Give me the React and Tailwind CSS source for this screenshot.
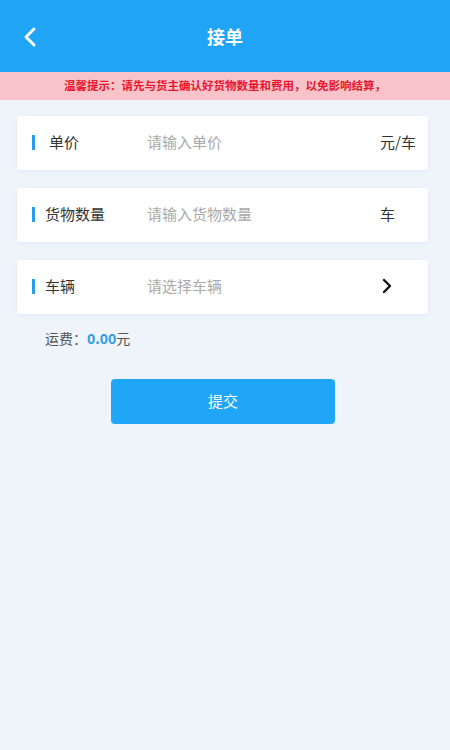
import React from "react";

function Row({ label, placeholder, right, pad }) {
  return (
    <div className="ml-[17px] mr-[22px] h-[54px] bg-white rounded-[3px] shadow-[0_1px_4px_rgba(150,170,200,0.18)] flex items-center pb-[2px]">
      <div className="w-[3px] h-[15px] bg-[#2a9be8] ml-[15px] shrink-0" />
      <div className={`w-[112px] shrink-0 text-[15px] text-[#333] ${pad ? "pl-[14px]" : "pl-[10px]"}`}>{label}</div>
      <div className="flex-1 text-[15px] text-[#a9a9a9]">{placeholder}</div>
      <div className="w-[48px] shrink-0 text-[15px] text-[#333]">{right}</div>
    </div>
  );
}

export default function App() {
  return (
    <div className="w-[450px] h-[750px] bg-[#eff4fb] flex flex-col" style={{ fontFamily: '"Noto Sans CJK SC", "Noto Sans", sans-serif' }}>
      <div className="h-[72px] bg-[#20a4f5] flex items-center relative shrink-0">
        <svg className="absolute left-[22px] top-[26px]" width="16" height="22" viewBox="0 0 16 22">
          <path d="M12 3 L4 11 L12 19" stroke="white" strokeWidth="3" fill="none" strokeLinecap="round" strokeLinejoin="round" />
        </svg>
        <div className="flex-1 text-center text-white text-[18px] font-bold">接单</div>
      </div>
      <div className="h-[28px] bg-[#f8c4ca] flex items-center justify-center text-[11.5px] font-bold text-[#e8162e] shrink-0">
        温馨提示：请先与货主确认好货物数量和费用，以免影响结算，
      </div>
      <div className="h-[16px] shrink-0" />
      <div className="flex flex-col gap-[18px]">
        <Row label="单价" placeholder="请输入单价" right="元/车" pad />
        <Row label="货物数量" placeholder="请输入货物数量" right="车" />
        <Row
          label="车辆"
          placeholder="请选择车辆"
          right={
            <svg width="12" height="16" viewBox="0 0 12 16" className="ml-[1px]">
              <path d="M3 2 L9 8 L3 14" stroke="#111" strokeWidth="2.4" fill="none" strokeLinecap="round" strokeLinejoin="round" />
            </svg>
          }
        />
      </div>
      <div className="ml-[45px] mt-[14px] text-[14px] text-[#555] flex items-center h-[20px]">
        运费：<span className="text-[#2a9be8] font-bold">0.00</span><span>元</span>
      </div>
      <div className="flex mt-[31px] pl-[111px]">
        <button className="w-[224px] h-[45px] rounded-[4px] bg-[#20a6f6] text-white text-[15px]">提交</button>
      </div>
    </div>
  );
}
